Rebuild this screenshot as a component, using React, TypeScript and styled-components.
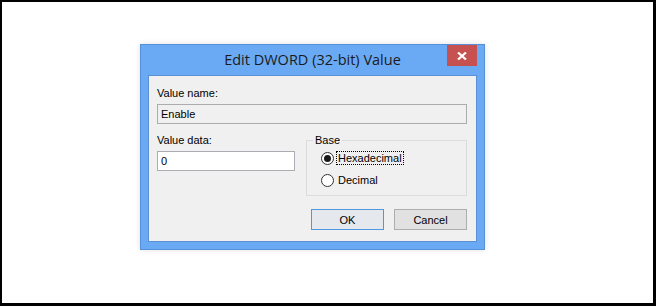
import React, { useState } from 'react';
import styled, { createGlobalStyle } from 'styled-components';

// Edit DWORD dialog (win8 look)

const GlobalStyle = createGlobalStyle`
	html, body {
		margin: 0;
		padding: 0;
		background: #ffffff;
	}
	* {
		box-sizing: border-box;
	}
`;

const Page = styled.div`
	width: 656px;
	height: 306px;
	border-style: solid;
	border-color: #000000;
	border-width: 2px 3px 3px 2px;
	background: #ffffff;
	padding: 42px 0 0 138px;
	font-family: 'Liberation Sans', Arial, sans-serif;
	font-size: 11px;
	color: #000000;
`;

const Window = styled.div`
	width: 345px;
	height: 206px;
	background: #6aaaf4;
	border: 1px solid #5690d6;
	box-shadow: 0 0 6px rgba(0, 0, 0, 0.12);
	display: flex;
	flex-direction: column;
`;

const TitleBar = styled.div`
	height: 30px;
	display: grid;
	grid-template-columns: 1fr auto 1fr;
	padding: 0 7px;
`;

const Title = styled.div`
	grid-column: 2;
	font-family: 'Open Sans', 'Noto Sans', sans-serif;
	font-size: 14.5px;
	line-height: 30px;
	color: #1b1b1b;
	white-space: nowrap;
`;

const CloseButton = styled.button`
	grid-column: 3;
	justify-self: end;
	width: 30px;
	height: 21px;
	border: none;
	padding: 0;
	background: #c75050;
	display: flex;
	align-items: center;
	justify-content: center;
	cursor: pointer;
`;

const Body = styled.div`
	flex: 1;
	margin: 0 7px 7px 7px;
	background: #f0f0f0;
	border: 1px solid #5a8fd2;
	padding: 11px 9px 0 8px;
	display: flex;
	flex-direction: column;
`;

const Label = styled.div`
	line-height: 13px;
	height: 13px;
	white-space: nowrap;
`;

const TextBox = styled.input<{ $readOnly?: boolean }>`
	display: block;
	width: 100%;
	height: 20px;
	margin-top: 4px;
	border: 1px solid ${(p) => (p.$readOnly ? '#acacac' : '#abadb3')};
	background: ${(p) => (p.$readOnly ? '#f0f0f0' : '#ffffff')};
	padding: 0 3px;
	font-family: 'Liberation Sans', Arial, sans-serif;
	font-size: 11px;
	color: #000000;
	outline: none;
`;

const Row = styled.div`
	display: flex;
	gap: 11px;
	margin-top: 10px;
`;

const Column = styled.div`
	width: 138px;
`;

const GroupBox = styled.fieldset`
	flex: 1;
	margin: 0;
	border: 1px solid #dcdcdc;
	padding: 0 0 4px 14px;
	height: 62px;
`;

const Legend = styled.legend`
	padding: 0 2px;
	margin-left: -8px;
	line-height: 13px;
	font-size: 11px;
`;

const RadioRow = styled.label`
	display: flex;
	align-items: center;
	height: 22px;
	gap: 2px;
	cursor: default;
`;

const RadioCircle = styled.span<{ $checked: boolean }>`
	width: 13px;
	height: 13px;
	border-radius: 50%;
	border: 1px solid #333333;
	background: #ffffff;
	display: flex;
	align-items: center;
	justify-content: center;
	&::after {
		content: '';
		width: 7px;
		height: 7px;
		border-radius: 50%;
		background: ${(p) => (p.$checked ? '#1a1a1a' : 'transparent')};
	}
`;

const RadioText = styled.span<{ $focused: boolean }>`
	line-height: 12px;
	padding: 0 1px;
	border: 1px dotted ${(p) => (p.$focused ? '#000000' : 'transparent')};
`;

const ButtonRow = styled.div`
	display: flex;
	justify-content: flex-end;
	gap: 10px;
	margin-top: 13px;
`;

const DialogButton = styled.button<{ $default?: boolean }>`
	width: 73px;
	height: 21px;
	border: 1px solid ${(p) => (p.$default ? '#4f98e0' : '#adadad')};
	background: ${(p) => (p.$default ? '#e5e8ec' : '#e1e1e1')};
	font-family: 'Liberation Sans', Arial, sans-serif;
	font-size: 11px;
	color: #000000;
	padding: 0;
`;

const App = () => {
	const [base, setBase] = useState<'hex' | 'dec'>('hex');
	const [value, setValue] = useState('0');

	return (
		<>
			<GlobalStyle />
			<Page>
				<Window>
					<TitleBar>
						<Title>Edit DWORD (32-bit) Value</Title>
						<CloseButton aria-label="Close">
							<svg width="10" height="8" viewBox="0 0 10 8">
								<path d="M1 0.5 L9 7.5 M9 0.5 L1 7.5" stroke="#ffffff" strokeWidth="2.2" />
							</svg>
						</CloseButton>
					</TitleBar>
					<Body>
						<Label>Value name:</Label>
						<TextBox $readOnly readOnly value="Enable" />
						<Row>
							<Column>
								<Label>Value data:</Label>
								<TextBox value={value} onChange={(e) => setValue(e.target.value)} />
							</Column>
							<GroupBox>
								<Legend>Base</Legend>
								<RadioRow onClick={() => setBase('hex')}>
									<RadioCircle $checked={base === 'hex'} />
									<RadioText $focused={base === 'hex'}>Hexadecimal</RadioText>
								</RadioRow>
								<RadioRow onClick={() => setBase('dec')}>
									<RadioCircle $checked={base === 'dec'} />
									<RadioText $focused={base === 'dec'}>Decimal</RadioText>
								</RadioRow>
							</GroupBox>
						</Row>
						<ButtonRow>
							<DialogButton $default>OK</DialogButton>
							<DialogButton>Cancel</DialogButton>
						</ButtonRow>
					</Body>
				</Window>
			</Page>
		</>
	);
};

export default App;
